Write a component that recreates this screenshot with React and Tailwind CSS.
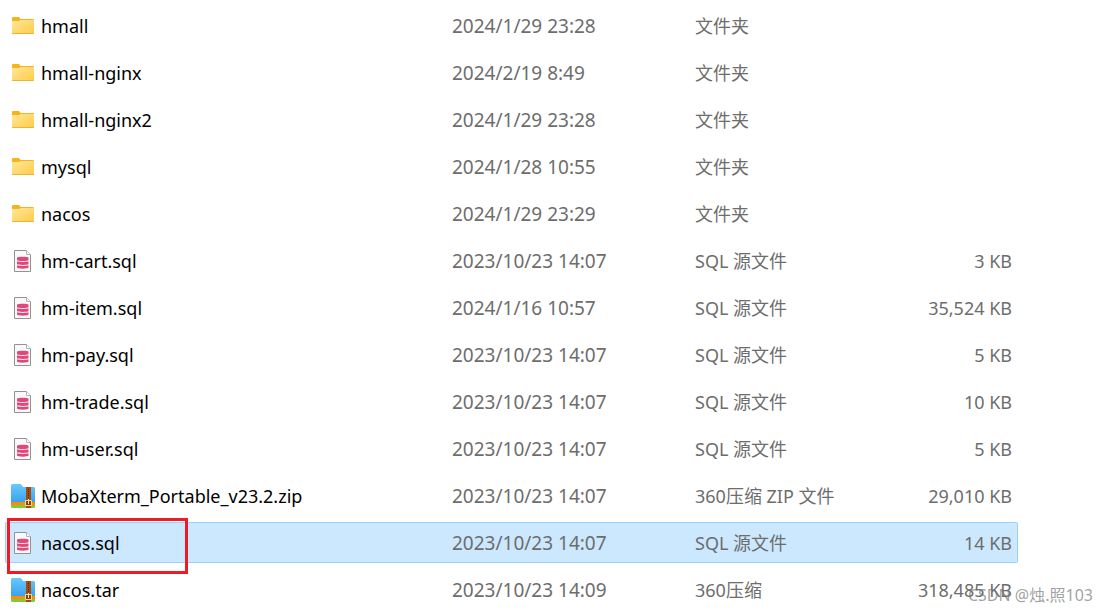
import React from 'react';

const files = [
  { kind: 'folder', name: 'hmall', date: '2024/1/29 23:28', type: '文件夹', size: '' },
  { kind: 'folder', name: 'hmall-nginx', date: '2024/2/19 8:49', type: '文件夹', size: '' },
  { kind: 'folder', name: 'hmall-nginx2', date: '2024/1/29 23:28', type: '文件夹', size: '' },
  { kind: 'folder', name: 'mysql', date: '2024/1/28 10:55', type: '文件夹', size: '' },
  { kind: 'folder', name: 'nacos', date: '2024/1/29 23:29', type: '文件夹', size: '' },
  { kind: 'sql', name: 'hm-cart.sql', date: '2023/10/23 14:07', type: 'SQL 源文件', size: '3 KB' },
  { kind: 'sql', name: 'hm-item.sql', date: '2024/1/16 10:57', type: 'SQL 源文件', size: '35,524 KB' },
  { kind: 'sql', name: 'hm-pay.sql', date: '2023/10/23 14:07', type: 'SQL 源文件', size: '5 KB' },
  { kind: 'sql', name: 'hm-trade.sql', date: '2023/10/23 14:07', type: 'SQL 源文件', size: '10 KB' },
  { kind: 'sql', name: 'hm-user.sql', date: '2023/10/23 14:07', type: 'SQL 源文件', size: '5 KB' },
  { kind: 'zip', name: 'MobaXterm_Portable_v23.2.zip', date: '2023/10/23 14:07', type: '360压缩 ZIP 文件', size: '29,010 KB' },
  { kind: 'sql', name: 'nacos.sql', date: '2023/10/23 14:07', type: 'SQL 源文件', size: '14 KB', selected: true },
  { kind: 'zip', name: 'nacos.tar', date: '2023/10/23 14:09', type: '360压缩', size: '318,485 KB' },
];

function FolderIcon() {
  return (
    <svg width="24" height="24" viewBox="0 0 24 24" aria-hidden="true">
      <defs>
        <linearGradient id="folder-front" x1="0" y1="0" x2="1" y2="1">
          <stop offset="0" stopColor="#ffe79c" />
          <stop offset="1" stopColor="#ffcb45" />
        </linearGradient>
      </defs>
      <path d="M1 4q0-1 1-1h6l1.500 2H22q1 0 1 1v3H1z" fill="#f7b416" />
      <path d="M1 7h7l1.500-1H23v13q0 1-1 1H2q-1 0-1-1z" fill="url(#folder-front)" />
      <path d="M1 19h22q0 1-1 1H2q-1 0-1-1z" fill="#edb23a" />
    </svg>
  );
}

function SqlIcon() {
  return (
    <svg width="24" height="24" viewBox="0 0 24 24" aria-hidden="true">
      <path d="M3.500 1.500h12l4 4v17h-16z" fill="#f9f9f9" stroke="#929292" />
      <path d="M15.500 1.500v4h4" fill="#fff" stroke="#b4b4b4" />
      <g fill="#e0487a">
        <path d="M6 8.800c0-1.400 11.500-1.400 11.500 0V11c0 1.300-11.500 1.300-11.500 0z" />
        <path d="M6 12.300c2 .8 9.500 .8 11.500 0V15c0 1.200-11.500 1.200-11.500 0z" />
        <path d="M6 16.300c2 .8 9.500 .8 11.500 0v2.200c0 1.500-11.500 1.500-11.500 0z" />
      </g>
    </svg>
  );
}

function ZipIcon() {
  return (
    <svg width="24" height="24" viewBox="0 0 24 24" aria-hidden="true">
      <defs>
        <linearGradient id="zip-body" x1="0" y1="0" x2="0" y2="1">
          <stop offset="0" stopColor="#69c9fb" />
          <stop offset="1" stopColor="#36a0ee" />
        </linearGradient>
      </defs>
      <path d="M0 1.500Q0 0 1.500 0H9q1 0 1.700 1L12 3h10.500Q24 3 24 4.500V19H0z" fill="url(#zip-body)" />
      <path d="M0 18h24v3H0z" fill="#ff8a12" />
      <path d="M0 21h24v1.500q0 1.500-1.500 1.500h-21Q0 24 0 22.500z" fill="#7fcb36" />
      <path d="M15 3h5v21h-5z" fill="#a04c14" />
      <path d="M17 5h1v1h-1zM17 7h1v1h-1zM17 9h1v1h-1zM17 11h1v1h-1zM17 13h1v1h-1z" fill="#57210a" />
      <path d="M14.500 16.500h6v5h-6z" fill="#8b3c10" stroke="#ffd98a" />
      <path d="M17 15h1v5h-1z" fill="#ffe6a5" />
    </svg>
  );
}

const icons = { folder: FolderIcon, sql: SqlIcon, zip: ZipIcon };

function FileRow({ file }) {
  const Icon = icons[file.kind];
  const tone = file.selected ? 'border-[#99d1ff] bg-[#cce8ff]' : 'border-transparent';
  const cell = `h-[41px] whitespace-nowrap border-y p-0 ${tone}`;
  return (
    <tr aria-selected={Boolean(file.selected)}>
      <td className={`${cell} relative rounded-l-xs border-l text-black`}>
        <div className="flex items-center gap-1.5 pl-[5px]">
          <span className="shrink-0">
            <Icon />
          </span>
          <span>{file.name}</span>
        </div>
        {file.selected && (
          <div className="pointer-events-none absolute -top-[5px] left-px h-14 w-[181px] border-3 border-[#ed1c24]" />
        )}
      </td>
      <td className={`${cell} text-[19px]`}>{file.date}</td>
      <td className={cell}>{file.type}</td>
      <td className={`${cell} rounded-r-xs border-r pr-[5px] text-right`}>{file.size}</td>
    </tr>
  );
}

export default function App() {
  return (
    <main className="relative h-screen overflow-hidden bg-white pr-[89px] pl-[5px] font-['Noto_Sans','Noto_Sans_CJK_SC',sans-serif] text-[18px] leading-6 text-[#6d6d6d]">
      <table className="-mt-px w-full table-fixed border-separate border-spacing-x-0 border-spacing-y-1.5">
        <colgroup>
          <col className="w-[447px]" />
          <col className="w-[243px]" />
          <col />
          <col className="w-[140px]" />
        </colgroup>
        <tbody>
          {files.map((file) => (
            <FileRow key={file.name} file={file} />
          ))}
        </tbody>
      </table>
      <div className="absolute right-3.5 bottom-1.5 font-['Noto_Sans','Noto_Sans_CJK_SC',sans-serif] text-base leading-6 text-[#777777]/70">
        CSDN @烛.照103
      </div>
    </main>
  );
}
